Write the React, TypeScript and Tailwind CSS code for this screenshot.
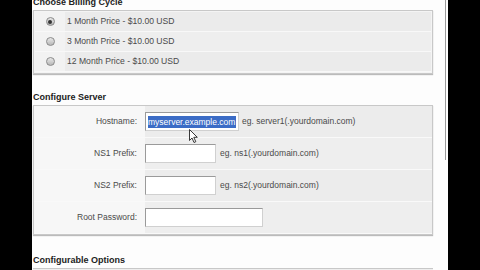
import React from "react";

const font = { fontFamily: '"Liberation Sans", Arial, sans-serif' };

function Radio({ checked }: { checked?: boolean }) {
  return (
    <span className="w-[9px] h-[9px] rounded-full border border-[#8a8a8a] bg-gradient-to-b from-[#e8e8e8] to-[#b8b8b8] flex items-center justify-center">
      {checked && <span className="w-[4px] h-[4px] rounded-full bg-[#333]" />}
    </span>
  );
}

function BillingRow({ text, checked, shade }: { text: string; checked?: boolean; shade: string }) {
  return (
    <div className={`flex h-[20px] items-center border-b border-[#f8f8f8] ${shade}`}>
      <div className="w-[30px] h-full flex items-center justify-center bg-[#f2f2f2]">
        <Radio checked={checked} />
      </div>
      <div className="pl-[2px] text-[8.6px] text-[#4a4a4a]">{text}</div>
    </div>
  );
}

function FieldRow({ label, children, shade }: { label: string; children: React.ReactNode; shade: string }) {
  return (
    <div className={`flex h-[32px] items-center border-b border-[#f9f9f9] ${shade}`}>
      <div className="w-[111px] h-full flex items-center justify-end pr-[8px] bg-[#f7f7f7] text-[8.5px] text-[#4a4a4a]">
        {label}
      </div>
      <div className="flex-1 h-full flex items-center">{children}</div>
    </div>
  );
}

function Input({ w, children }: { w: string; children?: React.ReactNode }) {
  return (
    <div className={`${w} h-[19px] bg-white border border-[#9a9a9a] border-r-[#d0d0d0] border-b-[#d0d0d0] flex items-center overflow-hidden`}>
      {children}
    </div>
  );
}

export default function App() {
  return (
    <div className="w-[480px] h-[270px] bg-black flex overflow-hidden" style={font}>
      <div className="w-[32px] shrink-0" />
      <div className="w-[416px] shrink-0 bg-[#fdfdfd] flex relative">
        <div className="w-[401px] pl-[1px] flex flex-col">
          <div className="h-[10px] -mt-[3px] text-[9px] font-bold text-[#222] leading-[10px]">Choose Billing Cycle</div>
          <div className="mt-[3px] border border-[#c8c8c8] shadow-[0_1px_1px_#bbb] p-[1px] bg-[#f4f4f4]">
            <BillingRow text="1 Month Price - $10.00 USD" checked shade="bg-[#ebebeb]" />
            <BillingRow text="3 Month Price - $10.00 USD" shade="bg-[#eeeeee]" />
            <BillingRow text="12 Month Price - $10.00 USD" shade="bg-[#ebebeb]" />
          </div>
          <div className="mt-[18px] h-[10px] text-[9px] font-bold text-[#222] leading-[10px]">Configure Server</div>
          <div className="mt-[3px] border border-[#c8c8c8] shadow-[0_1px_1px_#bbb] bg-[#f2f2f2] relative">
            <FieldRow label="Hostname:" shade="bg-[#ececec]">
              <Input w="w-[94px]">
                <span className="ml-[2px] bg-[#3b6cc6] text-white text-[8.5px] leading-[12px] whitespace-nowrap pr-[1px]">myserver.example.com</span>
              </Input>
              <span className="ml-[3px] text-[8.5px] text-[#4a4a4a] whitespace-nowrap">eg. server1(.yourdomain.com)</span>
            </FieldRow>
            <FieldRow label="NS1 Prefix:" shade="bg-[#eeeeee]">
              <Input w="w-[71px]" />
              <span className="ml-[4px] text-[8.5px] text-[#4a4a4a] whitespace-nowrap">eg. ns1(.yourdomain.com)</span>
            </FieldRow>
            <FieldRow label="NS2 Prefix:" shade="bg-[#ececec]">
              <Input w="w-[71px]" />
              <span className="ml-[4px] text-[8.5px] text-[#4a4a4a] whitespace-nowrap">eg. ns2(.yourdomain.com)</span>
            </FieldRow>
            <FieldRow label="Root Password:" shade="bg-[#eeeeee]">
              <Input w="w-[118px]" />
            </FieldRow>
            <svg className="absolute left-[155px] top-[23px]" width="10" height="15" viewBox="0 0 10 15">
              <path d="M0.5 0.5 L0.5 11.5 L3 9 L5 13.5 L6.8 12.7 L4.8 8.3 L8.3 8.3 Z" fill="#fff" stroke="#222" strokeWidth="0.9" />
            </svg>
          </div>
          <div className="mt-[20px] h-[10px] text-[9px] font-bold text-[#222] leading-[10px]">Configurable Options</div>
          <div className="mt-[3px] border-t border-[#c8c8c8] h-[10px] bg-[#eeeeee]" />
        </div>
        <div className="flex-1">
          <div className="ml-[12px] w-[1px] h-[160px] bg-[#9a9a9a]" />
        </div>
      </div>
      <div className="flex-1" />
    </div>
  );
}
